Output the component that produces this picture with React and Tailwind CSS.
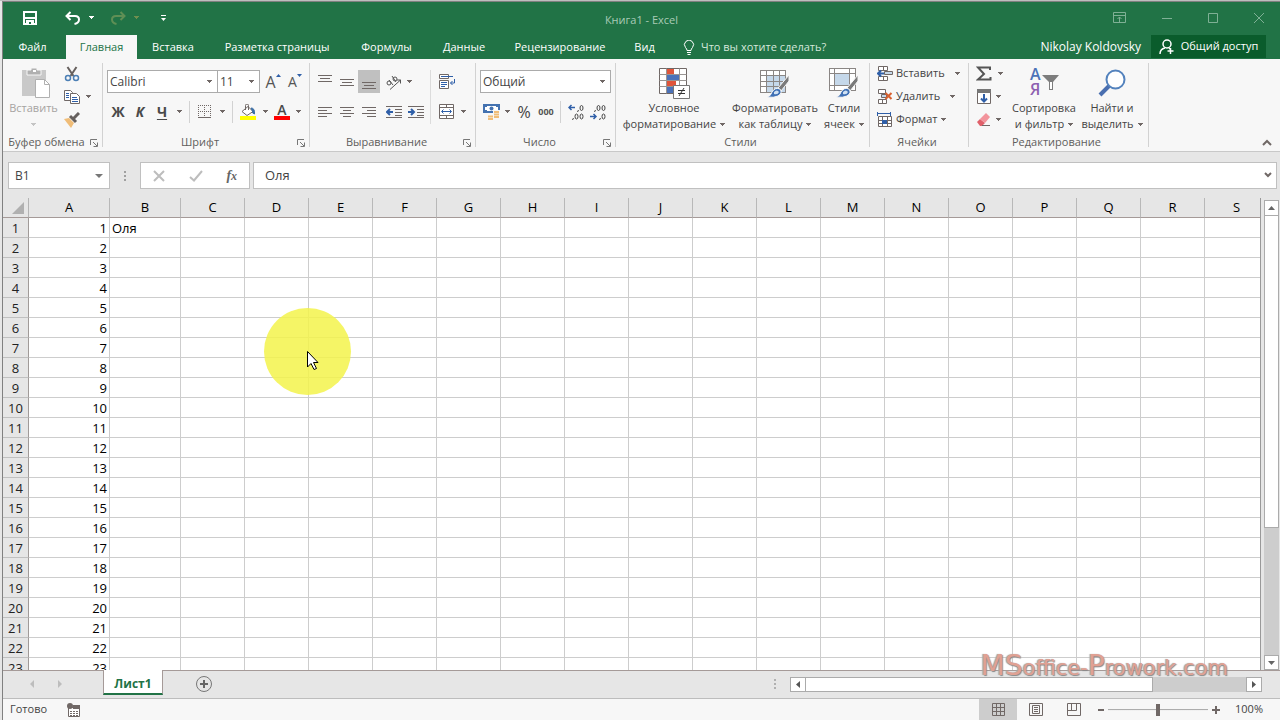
import React, { useState } from "react";

const COLUMNS = "ABCDEFGHIJKLMNOPQRS".split("");
const ROW_COUNT = 40;

const TABS = [
  { name: "Файл", width: "w-[63px] pr-1" },
  { name: "Главная", width: "w-[71px]" },
  { name: "Вставка", width: "w-[72px]" },
  { name: "Разметка страницы", width: "w-[136px]" },
  { name: "Формулы", width: "w-[83px]" },
  { name: "Данные", width: "w-[72px]" },
  { name: "Рецензирование", width: "w-[120px]" },
  { name: "Вид", width: "w-[49px]" },
];

function Icon({ w = 16, h = 16, children, className = "" }) {
  return (
    <svg
      width={w}
      height={h}
      viewBox={`0 0 ${w} ${h}`}
      fill="none"
      stroke="#706866"
      aria-hidden="true"
      className={`shrink-0 ${className}`}
    >
      {children}
    </svg>
  );
}

function Caret({ className = "text-[#706866]" }) {
  return (
    <svg width="5" height="3" viewBox="0 0 5 3" className={`shrink-0 ${className}`} aria-hidden="true">
      <path d="M0 0h5v1h-1v1h-1v1h-1v-1h-1v-1h-1z" fill="currentColor" />
    </svg>
  );
}

function ToolButton({ label, width = "w-[22px]", pressed, children }) {
  return (
    <button
      aria-label={label}
      className={`flex h-[23px] shrink-0 items-center justify-center ${width} ${
        pressed ? "bg-[#c0c0c0]" : "hover:bg-[#dcdcdc]"
      }`}
    >
      {children}
    </button>
  );
}

function CaretButton({ label, width = "w-3" }) {
  return (
    <ToolButton label={label} width={width}>
      <Caret />
    </ToolButton>
  );
}

function Divider() {
  return <span className="mx-1 h-[22px] w-px shrink-0 bg-[#d2d2d2]" />;
}

function RibbonSelect({ label, width, options }) {
  return (
    <div className={`relative flex h-[23px] items-center border border-[#ababab] bg-white ${width}`}>
      <select aria-label={label} className="h-full w-full appearance-none pl-0.5 text-xs outline-none">
        {options.map((option) => (
          <option key={option}>{option}</option>
        ))}
      </select>
      <span className="pointer-events-none absolute right-[5px]">
        <Caret />
      </span>
    </div>
  );
}

function Group({ label, width, launcher, children }) {
  return (
    <section className={`flex shrink-0 ${width}`}>
      <div className="flex min-w-0 flex-1 flex-col">
        <div className="h-[76px]">{children}</div>
        <div className="flex h-[17px] items-center pr-1">
          <span className="flex-1 whitespace-nowrap text-center text-[#605e5c]">{label}</span>
          {launcher && (
            <button aria-label={`Параметры: ${label}`}>
              <Icon w={8} h={8}>
                <path d="M.5 6V.5H7M3 3l4 4M7.500 3.500v4h-4" stroke="#777" />
              </Icon>
            </button>
          )}
        </div>
      </div>
      <span className="mt-1 h-[84px] w-px bg-[#d2d2d2]" />
    </section>
  );
}

function BigButton({ lines, width, children }) {
  return (
    <button className={`flex shrink-0 flex-col items-center pt-[7px] ${width}`}>
      <span className="flex h-[34px] items-center justify-center">{children}</span>
      <span className="whitespace-nowrap leading-4">{lines[0]}</span>
      <span className="flex items-center gap-1 whitespace-nowrap leading-4">
        {lines[1]}
        <Caret />
      </span>
    </button>
  );
}

function ClipboardGroup() {
  return (
    <Group label="Буфер обмена" width="w-[100px]" launcher>
      <div className="flex">
        <button className="flex w-[61px] flex-col items-center pt-[7px] text-[#a6a3a1]">
          <span className="flex h-[34px] items-center justify-center pl-1">
            <Icon w={30} h={32}>
              <path d="M1 3h24v26H1z" fill="#c9c9c9" stroke="none" />
              <path d="M6 3h4V1h6v2h4v5H6z" fill="#b0b0b0" stroke="#f7f7f7" />
              <path d="M12 3h3v2h-3z" fill="#fff" stroke="none" />
              <path d="M14.500 12.500h9l5 5v13h-14z" fill="#fff" stroke="#b0b0b0" />
              <path d="M23.500 12.500v5h5" stroke="#b0b0b0" />
            </Icon>
          </span>
          <span className="leading-4">Вставить</span>
          <span className="flex h-4 items-center">
            <Caret className="text-[#c4c4c4]" />
          </span>
        </button>
        <div className="flex flex-col pt-[3px]">
          <ToolButton label="Вырезать" width="w-4">
            <Icon>
              <path d="M3.500 1l6 9M12.500 1l-6 9" strokeWidth="2" stroke="#66605e" />
              <circle cx="4" cy="12" r="2.500" stroke="#4c7fb5" strokeWidth="1.500" />
              <circle cx="12" cy="12" r="2.500" stroke="#4c7fb5" strokeWidth="1.500" />
            </Icon>
          </ToolButton>
          <div className="flex">
            <ToolButton label="Копировать" width="w-4">
              <Icon>
                <path d="M.5 1.500h6l2 2v8h-8z" fill="#fff" />
                <path d="M2 4.500h3M2 6.500h3M2 8.500h3" stroke="#2f5fa8" />
                <path d="M6.500 4.500h6l3 3v7h-9z" fill="#fff" />
                <path d="M8 8.500h5M8 10.500h6M8 12.500h6" stroke="#2f5fa8" />
              </Icon>
            </ToolButton>
            <CaretButton label="Копировать: варианты" width="w-4" />
          </div>
          <ToolButton label="Формат по образцу" width="w-4">
            <Icon>
              <path d="M0 7l5-1 5 5-3 5z" fill="#f0bd78" stroke="none" />
              <path d="M6 4l6 6" strokeWidth="3" stroke="#66605e" />
              <path d="M9 7l6-6" strokeWidth="3" stroke="#66605e" />
            </Icon>
          </ToolButton>
        </div>
      </div>
    </Group>
  );
}

function FontGroup() {
  return (
    <Group label="Шрифт" width="w-[207px]" launcher>
      <div className="flex flex-col gap-[7px] pl-1 pt-[11px]">
        <div className="flex">
          <RibbonSelect label="Шрифт" width="w-[111px]" options={["Calibri", "Arial"]} />
          <RibbonSelect label="Размер шрифта" width="-ml-px w-[43px]" options={["11", "12", "14"]} />
          <span className="w-0.5" />
          <ToolButton label="Увеличить размер шрифта">
            <span className="text-base text-[#555]">A</span>
            <Icon w={5} h={3} className="mb-3"><path d="M0 3h5L2.500 0z" fill="#2f5fa8" stroke="none" /></Icon>
          </ToolButton>
          <ToolButton label="Уменьшить размер шрифта">
            <span className="text-sm text-[#555]">A</span>
            <Icon w={5} h={3} className="mb-3"><path d="M0 0h5L2.500 3z" fill="#2f5fa8" stroke="none" /></Icon>
          </ToolButton>
        </div>
        <div className="flex items-center text-sm text-[#4a4a4a]">
          <ToolButton label="Полужирный"><b>Ж</b></ToolButton>
          <ToolButton label="Курсив"><b className="italic">К</b></ToolButton>
          <ToolButton label="Подчеркнутый"><b className="underline underline-offset-2">Ч</b></ToolButton>
          <CaretButton label="Варианты подчеркивания" width="w-3" />
          <Divider />
          <ToolButton label="Границы">
            <Icon w={14} h={14}>
              <path d="M.5 0v13M6.500 0v13M12.500 0v13M0 .5h13M0 6.500h13" strokeDasharray="1 1" />
              <path d="M0 12.500h13" />
            </Icon>
          </ToolButton>
          <CaretButton label="Варианты границ" />
          <Divider />
          <ToolButton label="Цвет заливки">
            <Icon>
              <path d="M2 7.500l6-5 5 5-6 4z" fill="#fff" />
              <path d="M5.500 6V1.500a1.500 1.500 0 0 1 3 0V6" />
              <path d="M11 4q4 0 3.500 6-3-1-2-3z" fill="#3a6ea5" stroke="#3a6ea5" />
              <path d="M0 12h16v4H0z" fill="#ff0" stroke="none" />
            </Icon>
          </ToolButton>
          <CaretButton label="Варианты заливки" />
          <ToolButton label="Цвет текста">
            <span className="flex h-4 w-4 items-center justify-center border-b-4 border-[#f00] text-sm font-semibold leading-3">A</span>
          </ToolButton>
          <CaretButton label="Варианты цвета текста" width="w-2.5" />
        </div>
      </div>
    </Group>
  );
}

function AlignmentGroup() {
  return (
    <Group label="Выравнивание" width="w-[166px]" launcher>
      <div className="flex pl-1 pt-[11px]">
        <div className="flex w-[116px] flex-col gap-[7px]">
          <div className="flex">
            <ToolButton label="По верхнему краю">
              <Icon w={14} h={14}><path d="M0 .5h14M2 3.500h10M0 6.500h14" /></Icon>
            </ToolButton>
            <ToolButton label="По середине">
              <Icon w={14} h={14}><path d="M0 4.500h14M2 7.500h10M0 10.500h14" /></Icon>
            </ToolButton>
            <ToolButton label="По нижнему краю" pressed>
              <Icon w={14} h={14}><path d="M0 7.500h14M2 10.500h10M0 13.500h14" /></Icon>
            </ToolButton>
            <span className="w-1" />
            <ToolButton label="Ориентация" width="w-[19px]">
              <Icon w={17}>
                <g stroke="#555">
                  <circle cx="4" cy="9" r="2" />
                  <path d="M4 6l4 5M7 2l4 6" />
                  <circle cx="10" cy="5" r="2" />
                  <path d="M5 15.500L15.500 6M12 6h3.500v3.500" />
                </g>
              </Icon>
            </ToolButton>
            <CaretButton label="Варианты ориентации" />
          </div>
          <div className="flex">
            <ToolButton label="По левому краю">
              <Icon w={14} h={14}><path d="M0 2.500h14M0 5.500h9M0 8.500h14M0 11.500h9" /></Icon>
            </ToolButton>
            <ToolButton label="По центру">
              <Icon w={14} h={14}><path d="M0 2.500h14M3 5.500h8M0 8.500h14M3 11.500h8" /></Icon>
            </ToolButton>
            <ToolButton label="По правому краю">
              <Icon w={14} h={14}><path d="M0 2.500h14M5 5.500h9M0 8.500h14M5 11.500h9" /></Icon>
            </ToolButton>
            <span className="w-[3px]" />
            <ToolButton label="Уменьшить отступ">
              <Icon h={14}>
                <path d="M0 1.500h16M9 4.500h7M9 7.500h7M9 10.500h7M0 12.500h16" />
                <path d="M7 7H1M4 4L1 7l3 3" stroke="#2f5fa8" strokeWidth="2" />
              </Icon>
            </ToolButton>
            <ToolButton label="Увеличить отступ">
              <Icon h={14}>
                <path d="M0 1.500h16M9 4.500h7M9 7.500h7M9 10.500h7M0 12.500h16" />
                <path d="M0 7h6M3 4l3 3-3 3" stroke="#2f5fa8" strokeWidth="2" />
              </Icon>
            </ToolButton>
          </div>
        </div>
        <span className="mr-1 h-[54px] w-px bg-[#dcdcdc]" />
        <div className="flex flex-col gap-[7px]">
          <ToolButton label="Перенести текст" width="w-6">
            <Icon w={17}>
              <path d="M.5.500h9v4h-9zM.5 6.500h9v8h-9z" fill="#fff" />
              <path d="M2 2.500h12M2 8.500h6M2 10.500h6M2 12.500h4M15.500 5v4h-4M13.500 7l-2 2 2 2" stroke="#2f5fa8" />
            </Icon>
          </ToolButton>
          <div className="flex">
            <ToolButton label="Объединить и поместить в центре">
              <Icon w={15} h={15}>
                <path d="M.5.500h14v14h-14zM.5 3.500h14M.5 11.500h14M7.500 0v4M7.500 11v4" fill="#fff" />
                <path d="M3 7.500h9M4.500 5.500l-2 2 2 2M10.500 5.500l2 2-2 2" stroke="#2f5fa8" />
              </Icon>
            </ToolButton>
            <CaretButton label="Варианты объединения" />
          </div>
        </div>
      </div>
    </Group>
  );
}

function NumberGroup() {
  return (
    <Group label="Число" width="w-[140px]" launcher>
      <div className="flex flex-col gap-[7px] pl-1 pt-[11px]">
        <RibbonSelect label="Числовой формат" width="w-[131px]" options={["Общий", "Числовой", "Денежный"]} />
        <div className="flex items-center">
          <ToolButton label="Финансовый формат">
            <Icon w={17}>
              <path d="M0 0h17v9H0z" fill="#4472b0" stroke="none" />
              <path d="M2 3h2V2h9v1h2v3h-2v1H4V6H2z" fill="#fff" stroke="none" />
              <circle cx="8.500" cy="4.500" r="2" fill="#4472b0" stroke="none" />
              <path d="M10 6h7v10H4v-4h6z" fill="#f7f7f7" stroke="none" />
              <path d="M11 8h5M11 10.500h5M11 13h5M5 12.500h5M5 15h5" stroke="#f0bd78" strokeWidth="2" />
            </Icon>
          </ToolButton>
          <CaretButton label="Варианты финансового формата" width="w-2.5" />
          <ToolButton label="Процентный формат" width="w-6"><span className="text-base text-[#444]">%</span></ToolButton>
          <ToolButton label="Формат с разделителями" width="w-5"><span className="text-[9px] font-bold text-[#555]">000</span></ToolButton>
          <Divider />
          <ToolButton label="Увеличить разрядность">
            <Icon>
              <path d="M1 3.500h6M3.500 1L1 3.500 3.500 6" stroke="#2f5fa8" strokeWidth="1.500" />
              <g stroke="#444">
                <ellipse cx="13.500" cy="4" rx="1.500" ry="2.500" />
                <ellipse cx="8.500" cy="12.500" rx="1.500" ry="2.500" />
                <ellipse cx="13.500" cy="12.500" rx="1.500" ry="2.500" />
                <path d="M10.500 6l-1 2M5.500 14l-1 2" />
              </g>
            </Icon>
          </ToolButton>
          <ToolButton label="Уменьшить разрядность">
            <Icon>
              <path d="M0 12.500h6M3.500 10L6 12.500 3.500 15" stroke="#2f5fa8" strokeWidth="1.500" />
              <g stroke="#444">
                <ellipse cx="8.500" cy="4" rx="1.500" ry="2.500" />
                <ellipse cx="13.500" cy="4" rx="1.500" ry="2.500" />
                <ellipse cx="13.500" cy="12.500" rx="1.500" ry="2.500" />
                <path d="M5.500 6l-1 2M10.500 14l-1 2" />
              </g>
            </Icon>
          </ToolButton>
        </div>
      </div>
    </Group>
  );
}

function Brush() {
  return (
    <g transform="translate(7 7)">
      <path d="M11 13L22 0v6l-8 10z" fill="#7a7a7a" stroke="#f7f7f7" />
      <path d="M0 22q4-1 5-5 3-5 8-3 3 4-2 7-4 2-11 1z" fill="#3f70b5" stroke="#f7f7f7" />
      <path d="M7 17q3-3 5 0-1 3-5 2z" fill="#cfe0f2" stroke="none" />
    </g>
  );
}

function StylesGroup() {
  return (
    <Group label="Стили" width="w-[254px]">
      <div className="flex pl-[3px]">
        <BigButton lines={["Условное", "форматирование"]} width="w-[110px]">
          <Icon w={31} h={31}>
            <path d="M.5.500h27v25H.5z" fill="#fff" />
            <path d="M8 1h7v6H8zM8 13h9v6H8z" fill="#e0553a" stroke="none" />
            <path d="M8 7h12v6H8zM8 19h6v6H8z" fill="#4c72b8" stroke="none" />
            <path d="M.5 6.500h27M.5 12.500h27M.5 18.500h27M7.500.500v25M20.500.500v25" stroke="#9a9694" />
            <path d="M14.500 17.500h16v13h-16z" fill="#fff" stroke="#777" />
            <path d="M19 22.500h7M19 25.500h7M25 20l-5 8" stroke="#333" />
          </Icon>
        </BigButton>
        <BigButton lines={["Форматировать", "как таблицу"]} width="w-[92px]">
          <Icon w={31} h={31}>
            <path d="M.5 2.500h25v22H.5z" fill="#fff" />
            <path d="M7 8h18v16H7z" fill="#c5d8ea" stroke="none" />
            <path d="M.5 2.500h25v22H.5zM.5 7.500h25M.5 13.500h25M.5 18.500h25M6.500 2.500v22M13.500 2.500v22M19.500 2.500v22" stroke="#8a8684" />
            <Brush />
          </Icon>
        </BigButton>
        <BigButton lines={["Стили", "ячеек"]} width="w-[46px]">
          <Icon w={31} h={31}>
            <path d="M.5.500h26v22H.5z" fill="#fff" />
            <path d="M6 6h15v11H6z" fill="#c5d8ea" stroke="none" />
            <path d="M.5.500h26v22H.5zM.5 5.500h26M.5 17.500h26M5.500.500v22M20.500.500v22" stroke="#8a8684" />
            <Brush />
          </Icon>
        </BigButton>
      </div>
    </Group>
  );
}

function CellsGroup() {
  return (
    <Group label="Ячейки" width="w-[99px]">
      <div className="flex flex-col items-start pl-[7px] pt-[3px]">
        <button className="flex h-[23px] items-center">
          <Icon>
            <path d="M1.500.500h9v4h-9zM6.500.500v4M1.500 10.500h9v4h-9zM6.500 10.500v4" fill="#fff" />
            <path d="M7.500 5.500h8v3h-8z" fill="#c5d8ea" />
            <path d="M7 7.500H1M4 4.500l-3 3 3 3" stroke="#2f5fa8" strokeWidth="2" />
          </Icon>
          <span className="mr-2.5 pl-[3px]">Вставить</span>
          <Caret />
        </button>
        <button className="flex h-[23px] items-center">
          <Icon>
            <path d="M1.500.500h7v4h-7zM1.500 10.500h8v4h-8zM5.500 10.500v4" fill="#fff" />
            <path d="M4.500 5.500h5v3h-5z" fill="#c5d8ea" />
            <path d="M8.500 4l6 6M14.500 4l-6 6" stroke="#d8602f" strokeWidth="2" />
          </Icon>
          <span className="mr-2.5 pl-[3px]">Удалить</span>
          <Caret />
        </button>
        <button className="flex h-[23px] items-center">
          <Icon>
            <path d="M1.500 4.500h13v10h-13zM1.500 8.500h13M1.500 11.500h13M5.500 4.500v10M10.500 4.500v10" fill="#fff" />
            <path d="M5 8h5v4H5z" fill="#2f5fa8" stroke="none" />
            <path d="M.5 0v4M13.500 0v4M1 1.500h12" stroke="#2f5fa8" />
          </Icon>
          <span className="mr-1 pl-[3px]">Формат</span>
          <Caret />
        </button>
      </div>
    </Group>
  );
}

function EditingGroup() {
  return (
    <Group label="Редактирование" width="w-[180px]">
      <div className="flex pl-[7px]">
        <div className="flex w-8 shrink-0 flex-col pt-[3px]">
          <div className="flex">
            <ToolButton label="Сумма" width="w-4">
              <Icon><path d="M14 4V1.500H2L8 8l-6 5.500h12.500V11" strokeWidth="2" stroke="#555" /></Icon>
            </ToolButton>
            <CaretButton label="Варианты суммы" width="w-4" />
          </div>
          <div className="flex">
            <ToolButton label="Заполнить" width="w-4">
              <Icon>
                <path d="M1.500.500h13v14h-13z" fill="#fff" />
                <path d="M1 0h14v4H1z" fill="#777" stroke="none" />
                <path d="M8 5v8M5 9.500l3 3 3-3" stroke="#2f5fa8" strokeWidth="2" />
              </Icon>
            </ToolButton>
            <CaretButton label="Варианты заполнения" width="w-3" />
          </div>
          <div className="flex">
            <ToolButton label="Очистить" width="w-4">
              <Icon>
                <path d="M1 10l3-3 5 4-3 3H4z" fill="#e0606a" stroke="none" />
                <path d="M4 7l6-6 4 4-5 6z" fill="#f2949c" stroke="none" />
                <path d="M6 13.500h8" />
              </Icon>
            </ToolButton>
            <CaretButton label="Варианты очистки" width="w-3" />
          </div>
        </div>
        <BigButton lines={["Сортировка", "и фильтр"]} width="w-[72px]">
          <Icon w={30} h={32}>
            <text x="1" y="13" fontSize="16" fontWeight="600" fill="#4c72b8" stroke="none">А</text>
            <text x="1" y="28" fontSize="16" fontWeight="600" fill="#8d5fb0" stroke="none">Я</text>
            <path d="M13 8h17l-6 7v8h-4v-8z" fill="#7d7d7d" stroke="none" />
            <path d="M21 15h2v7h-2z" fill="#fff" stroke="none" />
          </Icon>
        </BigButton>
        <BigButton lines={["Найти и", "выделить"]} width="w-[64px]">
          <Icon w={28} h={30}>
            <path d="M2 27l9-9" stroke="#4a6fb0" strokeWidth="4" />
            <circle cx="17.500" cy="11.500" r="9" fill="#fff" stroke="#5382bd" strokeWidth="2" />
          </Icon>
        </BigButton>
      </div>
    </Group>
  );
}

function TitleBar() {
  return (
    <div className="flex h-[33px] items-start">
      <div className="flex h-[31px] w-1/3 items-center pl-5">
        <button aria-label="Сохранить">
          <Icon w={14} h={14}>
            <path d="M1 1h12v12H1z" stroke="#fff" strokeWidth="2" />
            <path d="M2 7h10M4 10h6v4H4z" stroke="#fff" strokeWidth="2" fill="#fff" />
            <path d="M6 11h2v2H6z" fill="#217346" stroke="none" />
          </Icon>
        </button>
        <button aria-label="Отменить" className="ml-7 flex items-center gap-2">
          <Icon w={16} h={14}>
            <path d="M5.500 1L1.500 5l4 4M2 5h8q4 0 4 3.500T9.500 13" stroke="#fff" strokeWidth="2" />
          </Icon>
          <Caret className="text-white" />
        </button>
        <button aria-label="Вернуть" className="ml-4 flex items-center gap-2">
          <Icon w={16} h={14}>
            <path d="M10.500 1l4 4-4 4M14 5H6Q2 5 2 8.500T6.500 13" stroke="#5f8f55" strokeWidth="2" />
          </Icon>
          <Caret className="text-[#6f8f4f]" />
        </button>
        <button aria-label="Настройка панели быстрого доступа" className="ml-[22px]">
          <Icon w={5} h={6}><path d="M0 .5h5" stroke="#fff" /><path d="M0 3h5L2.500 6z" fill="#fff" stroke="none" /></Icon>
        </button>
      </div>
      <h1 className="w-1/3 text-center leading-[35px] text-[#a9cbb6]">Книга1 - Excel</h1>
      <div className="flex h-[31px] w-1/3 items-center justify-end gap-[34px] pr-[15px]">
        <button aria-label="Параметры ленты">
          <Icon w={14} h={12}><path d="M.5.500h12v10H.5zM.5 3.500h12M6.500 10V5M4.500 7l2-2 2 2" stroke="#7fb095" /></Icon>
        </button>
        <button aria-label="Свернуть">
          <Icon w={12} h={12}><path d="M1 6.500h10" stroke="#7fb095" /></Icon>
        </button>
        <button aria-label="Развернуть">
          <Icon w={12} h={12}><path d="M1.500 1.500h9v9h-9z" stroke="#7fb095" /></Icon>
        </button>
        <button aria-label="Закрыть">
          <Icon w={12} h={12}><path d="M1 1l10 10M11 1L1 11" stroke="#7fb095" /></Icon>
        </button>
      </div>
    </div>
  );
}

function TabBar({ active, onSelect }) {
  return (
    <div className="flex h-6 items-stretch text-white">
      <nav className="flex">
        {TABS.map((tab) => (
          <button
            key={tab.name}
            onClick={() => onSelect(tab.name)}
            className={`whitespace-nowrap font-medium ${tab.width} ${
              active === tab.name ? "bg-[#f7f7f7] text-[#217346]" : ""
            }`}
          >
            {tab.name}
          </button>
        ))}
      </nav>
      <button className="ml-3.5 flex items-center gap-1.5 text-[#d5e8dc]">
        <Icon w={12} h={15}>
          <path d="M4 10.500Q4 9 2.500 7.500a4.500 4.500 0 1 1 7 0Q8 9 8 10.500zM4 12.500h4M4.500 14.500h3" stroke="#fff" />
        </Icon>
        Что вы хотите сделать?
      </button>
      <span className="flex-1" />
      <span className="flex items-center pr-2.5 text-xs">Nikolay Koldovsky</span>
      <button className="mb-px mr-3.5 flex w-[115px] items-center justify-center gap-1.5 whitespace-nowrap bg-[#0a5c2c] font-medium">
        <Icon w={16} h={16}>
          <circle cx="8" cy="5" r="4" stroke="#fff" strokeWidth="1.500" />
          <path d="M1 15q0-5 5-6M10 9l1 1M11.500 9v6M8.500 12h6" stroke="#fff" strokeWidth="1.500" />
        </Icon>
        Общий доступ
      </button>
    </div>
  );
}

function FormulaBar({ cell, value, onChange }) {
  return (
    <div className="flex h-[46px] shrink-0 pl-[5px] pr-[3px] pt-[10px] text-xs text-[#444]">
      <div className="flex h-[27px] w-[102px] items-center border border-[#c0c0c0] bg-white pr-1.5">
        <input aria-label="Имя" defaultValue={cell} className="min-w-0 flex-1 pl-1.5 outline-none" />
        <Icon w={8} h={4}><path d="M0 0h8L4 4z" fill="#777" stroke="none" /></Icon>
      </div>
      <span className="flex h-[27px] w-[30px] items-center justify-center">
        <Icon w={2} h={10}><path d="M0 1h2M0 5h2M0 9h2" stroke="#a0a0a0" strokeWidth="2" /></Icon>
      </span>
      <div className="flex h-[27px] w-[110px] items-center justify-around border border-[#c0c0c0] bg-white">
        <button aria-label="Отмена">
          <Icon w={12} h={12}><path d="M1 1l10 10M11 1L1 11" stroke="#bdbdbd" strokeWidth="2" /></Icon>
        </button>
        <button aria-label="Ввод">
          <Icon w={14} h={12}><path d="M1 7l4 3.500L13 1" stroke="#bdbdbd" strokeWidth="2" /></Icon>
        </button>
        <button aria-label="Вставить функцию" className="font-['Liberation_Serif',serif] text-sm font-bold italic leading-4 text-[#666]">
          f<span className="text-xs">x</span>
        </button>
      </div>
      <div className="ml-[3px] flex h-[27px] flex-1 items-center border border-[#c0c0c0] bg-white pr-1">
        <input
          aria-label="Строка формул"
          value={value}
          onChange={(event) => onChange(event.target.value)}
          className="min-w-0 flex-1 pl-[11px] text-[13px] outline-none"
        />
        <button aria-label="Развернуть строку формул" className="pb-0.5">
          <Icon w={8} h={6}><path d="M1 1l3 3 3-3" strokeWidth="2" /></Icon>
        </button>
      </div>
    </div>
  );
}

function Sheet({ value }) {
  return (
    <div className="flex min-h-0 flex-1 border-b border-[#a59a98]">
      <div className="min-w-0 flex-1 overflow-hidden border-r border-[#999]">
        <table className="w-max table-fixed border-separate border-spacing-0 text-[13px] leading-[17px] text-black">
          <colgroup>
            <col className="w-[26px]" />
            {COLUMNS.map((name) => (
              <col
                key={name}
                className={name === "A" ? "w-[81px]" : name === "B" ? "w-[71px]" : "w-16"}
              />
            ))}
          </colgroup>
          <thead>
            <tr className="h-5 bg-[#e6e6e6]">
              <td className="border-b border-r border-b-[#a59a98] border-r-[#b4b4b4] p-0">
                <Icon w={12} h={12} className="ml-auto mr-1"><path d="M12 0v12H0z" fill="#b0b0b0" stroke="none" /></Icon>
              </td>
              {COLUMNS.map((name) => (
                <th
                  key={name}
                  scope="col"
                  className="border-b border-r border-b-[#a59a98] border-r-[#b8b8b8] p-0 text-center font-normal"
                >
                  {name}
                </th>
              ))}
            </tr>
          </thead>
          <tbody>
            {Array.from({ length: ROW_COUNT }, (_, i) => i + 1).map((row) => (
              <tr key={row} className="h-5">
                <th
                  scope="row"
                  className="border-b border-r border-b-[#c0c0c0] border-r-[#a09a98] bg-[#e6e6e6] p-0 pt-0.5 text-center font-normal text-[#222]"
                >
                  {row}
                </th>
                {COLUMNS.map((name) => (
                  <td
                    key={name}
                    className={`whitespace-nowrap border-b border-r border-[#cdcdcd] bg-white pb-0 pl-0.5 pr-0.5 pt-0.5 ${
                      name === "A" ? "text-right" : "text-left"
                    }`}
                  >
                    {name === "A" && row}
                    {name === "B" && row === 1 && value}
                  </td>
                ))}
              </tr>
            ))}
          </tbody>
        </table>
      </div>
      <div className="flex w-[19px] shrink-0 flex-col pl-[3px] pr-px pt-0.5">
        <button aria-label="Прокрутить вверх" className="flex h-4 shrink-0 items-center justify-center border border-[#ababab] bg-white">
          <Icon w={7} h={4}><path d="M0 4h7L3.500 0z" fill="#666" stroke="none" /></Icon>
        </button>
        <div className="flex-1 bg-[#cdcdcd]">
          <div className="h-[71%] border border-t-0 border-[#ababab] bg-white" />
        </div>
        <button aria-label="Прокрутить вниз" className="flex h-[15px] shrink-0 items-center justify-center border border-[#ababab] bg-white">
          <Icon w={7} h={4}><path d="M0 0h7L3.500 4z" fill="#666" stroke="none" /></Icon>
        </button>
      </div>
    </div>
  );
}

function SheetTabs() {
  return (
    <div className="flex h-[27px] shrink-0 items-start">
      <div className="flex h-[26px] w-[100px] items-center gap-6 pl-[27px]">
        <button aria-label="Предыдущий лист">
          <Icon w={4} h={8}><path d="M4 0v8L0 4z" fill="#bdbdbd" stroke="none" /></Icon>
        </button>
        <button aria-label="Следующий лист">
          <Icon w={4} h={8}><path d="M0 0v8l4-4z" fill="#bdbdbd" stroke="none" /></Icon>
        </button>
      </div>
      <button className="-mt-px flex h-[25px] w-[60px] items-center justify-center border-x border-b-2 border-x-[#a59a98] border-b-[#217346] bg-white pt-1 text-xs font-bold text-[#217346]">
        Лист1
      </button>
      <button aria-label="Новый лист" className="ml-8 mt-1">
        <Icon w={18} h={18}>
          <circle cx="9" cy="9" r="7.500" stroke="#777" />
          <path d="M9 5v8M5 9h8" stroke="#666" strokeWidth="2" />
        </Icon>
      </button>
      <span className="flex-1" />
      <span className="mt-2 pr-3.5">
        <Icon w={2} h={10}><path d="M0 1h2M0 5h2M0 9h2" stroke="#b0b0b0" strokeWidth="2" /></Icon>
      </span>
      <div className="mr-[18px] mt-1.5 flex h-[15px] w-[37%] min-w-[200px] bg-[#cdcdcd]">
        <button aria-label="Прокрутить влево" className="flex w-4 items-center justify-center border border-[#ababab] bg-white">
          <Icon w={4} h={7}><path d="M4 0v7L0 3.500z" fill="#555" stroke="none" /></Icon>
        </button>
        <div className="flex-1">
          <div className="h-full w-[79%] border border-l-0 border-[#ababab] bg-white" />
        </div>
        <button aria-label="Прокрутить вправо" className="flex w-4 items-center justify-center border border-[#ababab] bg-white">
          <Icon w={4} h={7}><path d="M0 0v7l4-3.500z" fill="#555" stroke="none" /></Icon>
        </button>
      </div>
    </div>
  );
}

function StatusBar() {
  return (
    <footer className="flex h-[22px] shrink-0 items-center border-t border-[#bdbdbd] bg-[#f7f7f7] pl-[7px]">
      <span>Готово</span>
      <button aria-label="Запись макроса" className="ml-5">
        <Icon w={14} h={14}>
          <path d="M1.500 4.500h11v9h-11z" fill="#fff" />
          <path d="M3 8.500h9M3 10.500h9M3 12.500h9" strokeDasharray="2 1" />
          <path d="M6 2h7v4H6z" fill="#706866" stroke="none" />
          <circle cx="3" cy="3" r="3" fill="#706866" stroke="none" />
        </Icon>
      </button>
      <span className="flex-1" />
      <button aria-label="Обычный" className="flex h-full w-[38px] items-center justify-center bg-[#cdcdcd]">
        <Icon w={13} h={13}><path d="M.5.500h12v12H.5zM.5 4.500h12M.5 8.500h12M4.500.500v12M8.500.500v12" /></Icon>
      </button>
      <button aria-label="Разметка страницы" className="flex h-full w-[38px] items-center justify-center">
        <Icon w={14} h={13}><path d="M.5.500h13v12H.5zM3.500 2.500h7v8h-7zM5 4.500h4M5 6.500h4M5 8.500h4" /></Icon>
      </button>
      <button aria-label="Страничный режим" className="flex h-full w-[38px] items-center justify-center">
        <Icon w={14} h={13}><path d="M.5.500h13v12H.5zM.5 7.500h9M4.500.500v7M9.500.500v7" /></Icon>
      </button>
      <button aria-label="Уменьшить масштаб" className="ml-[5px]">
        <Icon w={6} h={8}><path d="M0 4h6" strokeWidth="2" /></Icon>
      </button>
      <input
        type="range"
        aria-label="Масштаб"
        min="10"
        max="190"
        defaultValue="100"
        className="mx-1 h-3 w-[100px] appearance-none bg-linear-to-b from-transparent from-45% via-[#a6a6a6] via-45% to-transparent to-55% [&::-webkit-slider-thumb]:h-3 [&::-webkit-slider-thumb]:w-1 [&::-webkit-slider-thumb]:appearance-none [&::-webkit-slider-thumb]:bg-[#706866]"
      />
      <button aria-label="Увеличить масштаб">
        <Icon w={8} h={8}><path d="M0 4h8M4 0v8" strokeWidth="2" /></Icon>
      </button>
      <button className="w-[60px] pr-0.5 text-center">100%</button>
    </footer>
  );
}

export default function App() {
  const [tab, setTab] = useState("Главная");
  const [value, setValue] = useState("Оля");

  return (
    <div className="relative flex h-screen flex-col overflow-hidden border-t border-[#bdbdbd] bg-[#e6e6e6] pl-0.5 font-['Open_Sans','Noto_Sans',sans-serif] text-[11px] text-[#444]">
      <div className="flex min-h-0 flex-1 flex-col border-l border-t border-[#808080]">
        <header className="shrink-0 bg-[#217346]">
          <TitleBar />
          <TabBar active={tab} onSelect={setTab} />
        </header>

        <div className="flex h-[93px] shrink-0 border-b border-[#c8c8c8] bg-[#f7f7f7]">
          <ClipboardGroup />
          <FontGroup />
          <AlignmentGroup />
          <NumberGroup />
          <StylesGroup />
          <CellsGroup />
          <EditingGroup />
          <button aria-label="Свернуть ленту" className="mb-1 ml-auto mr-2 self-end">
            <Icon w={10} h={8}><path d="M1 6l4-4 4 4" strokeWidth="2" /></Icon>
          </button>
        </div>

        <FormulaBar cell="B1" value={value} onChange={setValue} />
        <Sheet value={value} />
        <SheetTabs />
        <StatusBar />
      </div>

      {/* highlighted mouse pointer */}
      <div className="pointer-events-none absolute left-[264px] top-[307px] h-[87px] w-[87px] rounded-full bg-[#f3f34b]/85" />
      <Icon w={12} h={20} className="pointer-events-none absolute left-[307px] top-[350px]">
        <path d="M.5.500v15.500l3.500-3.500 3 6 2.500-1-3-6H11z" fill="#fff" stroke="#000" />
      </Icon>

      <div className="pointer-events-none absolute bottom-9 right-[52px] whitespace-nowrap font-['DejaVu_Sans',sans-serif] text-[21px] leading-8 text-[#e0a193] [text-shadow:1px_1px_1px_#888,-1px_0_1px_#aaa]">
        <span className="text-[28px]">MS</span>office-<span className="text-[28px]">P</span>rowork.com
      </div>
    </div>
  );
}
